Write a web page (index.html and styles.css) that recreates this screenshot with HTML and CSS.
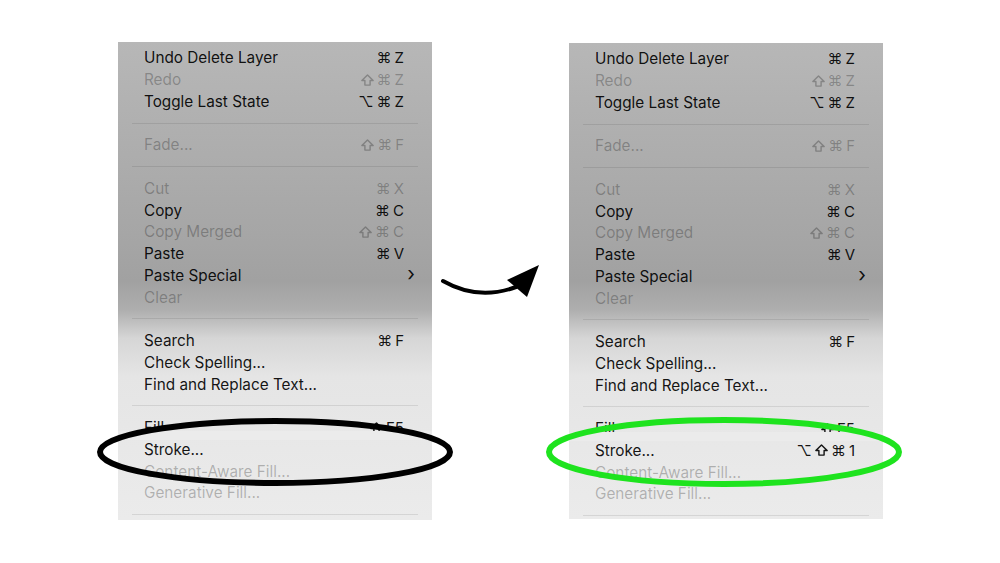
FILE: index.html
```html
<!DOCTYPE html>
<html lang="en">
<head>
    <meta charset="UTF-8">
    <title>Edit Menu – Vorher / Nachher</title>
    <link rel="stylesheet" href="styles.css">
</head>
<body>
<div class="seite">

    <!-- Menü vorher -->
    <div class="menue menue-links">
        <div class="zeile"><span>Undo Delete Layer</span><span class="kurz"><i>⌘</i><i>Z</i></span></div>
        <div class="zeile aus"><span>Redo</span><span class="kurz"><svg class="shift" viewBox="0 0 12 11"><path d="M6 0.8 L11.2 6 H8.4 V10.2 H3.6 V6 H0.8 Z"/></svg><i>⌘</i><i>Z</i></span></div>
        <div class="zeile"><span>Toggle Last State</span><span class="kurz"><i>⌥</i><i>⌘</i><i>Z</i></span></div>
        <div class="trenner"></div>
        <div class="zeile aus"><span>Fade...</span><span class="kurz"><svg class="shift" viewBox="0 0 12 11"><path d="M6 0.8 L11.2 6 H8.4 V10.2 H3.6 V6 H0.8 Z"/></svg><i>⌘</i><i>F</i></span></div>
        <div class="trenner"></div>
        <div class="zeile aus"><span>Cut</span><span class="kurz"><i>⌘</i><i>X</i></span></div>
        <div class="zeile"><span>Copy</span><span class="kurz"><i>⌘</i><i>C</i></span></div>
        <div class="zeile aus"><span>Copy Merged</span><span class="kurz"><svg class="shift" viewBox="0 0 12 11"><path d="M6 0.8 L11.2 6 H8.4 V10.2 H3.6 V6 H0.8 Z"/></svg><i>⌘</i><i>C</i></span></div>
        <div class="zeile"><span>Paste</span><span class="kurz"><i>⌘</i><i>V</i></span></div>
        <div class="zeile untermenue"><span>Paste Special</span><span class="pfeil">›</span></div>
        <div class="zeile aus"><span>Clear</span></div>
        <div class="trenner"></div>
        <div class="zeile"><span>Search</span><span class="kurz"><i>⌘</i><i>F</i></span></div>
        <div class="zeile"><span>Check Spelling...</span></div>
        <div class="zeile"><span>Find and Replace Text...</span></div>
        <div class="trenner"></div>
        <div class="zeile verdeckt"><span>Fill...</span><span class="kurz"><svg class="shift" viewBox="0 0 12 11"><path d="M6 0.8 L11.2 6 H8.4 V10.2 H3.6 V6 H0.8 Z"/></svg><i>F5</i></span></div>
        <div class="zeile"><span>Stroke...</span></div>
        <div class="zeile aus"><span>Content-Aware Fill...</span></div>
        <div class="zeile aus"><span>Generative Fill...</span></div>
        <div class="trenner"></div>
    </div>

    <!-- Menü nachher -->
    <div class="menue menue-rechts">
        <div class="zeile"><span>Undo Delete Layer</span><span class="kurz"><i>⌘</i><i>Z</i></span></div>
        <div class="zeile aus"><span>Redo</span><span class="kurz"><svg class="shift" viewBox="0 0 12 11"><path d="M6 0.8 L11.2 6 H8.4 V10.2 H3.6 V6 H0.8 Z"/></svg><i>⌘</i><i>Z</i></span></div>
        <div class="zeile"><span>Toggle Last State</span><span class="kurz"><i>⌥</i><i>⌘</i><i>Z</i></span></div>
        <div class="trenner"></div>
        <div class="zeile aus"><span>Fade...</span><span class="kurz"><svg class="shift" viewBox="0 0 12 11"><path d="M6 0.8 L11.2 6 H8.4 V10.2 H3.6 V6 H0.8 Z"/></svg><i>⌘</i><i>F</i></span></div>
        <div class="trenner"></div>
        <div class="zeile aus"><span>Cut</span><span class="kurz"><i>⌘</i><i>X</i></span></div>
        <div class="zeile"><span>Copy</span><span class="kurz"><i>⌘</i><i>C</i></span></div>
        <div class="zeile aus"><span>Copy Merged</span><span class="kurz"><svg class="shift" viewBox="0 0 12 11"><path d="M6 0.8 L11.2 6 H8.4 V10.2 H3.6 V6 H0.8 Z"/></svg><i>⌘</i><i>C</i></span></div>
        <div class="zeile"><span>Paste</span><span class="kurz"><i>⌘</i><i>V</i></span></div>
        <div class="zeile untermenue"><span>Paste Special</span><span class="pfeil">›</span></div>
        <div class="zeile aus"><span>Clear</span></div>
        <div class="trenner"></div>
        <div class="zeile"><span>Search</span><span class="kurz"><i>⌘</i><i>F</i></span></div>
        <div class="zeile"><span>Check Spelling...</span></div>
        <div class="zeile"><span>Find and Replace Text...</span></div>
        <div class="trenner"></div>
        <div class="zeile verdeckt"><span>Fill...</span><span class="kurz"><svg class="shift" viewBox="0 0 12 11"><path d="M6 0.8 L11.2 6 H8.4 V10.2 H3.6 V6 H0.8 Z"/></svg><i>F5</i></span></div>
        <div class="zeile"><span>Stroke...</span><span class="kurz"><i>⌥</i><svg class="shift" viewBox="0 0 12 11"><path d="M6 0.8 L11.2 6 H8.4 V10.2 H3.6 V6 H0.8 Z"/></svg><i>⌘</i><i>1</i></span></div>
        <div class="zeile aus"><span>Content-Aware Fill...</span></div>
        <div class="zeile aus"><span>Generative Fill...</span></div>
        <div class="trenner"></div>
    </div>

    <!-- Markierungen und Pfeil über den Menüs -->
    <svg class="markierung" width="1000" height="563" viewBox="0 0 1000 563">
        <path d="M443 281 Q 478 301 516 287" fill="none" stroke="#000" stroke-width="4" stroke-linecap="round"/>
        <polygon points="507,280 539,265 527,297" fill="#000"/>
        <ellipse cx="275" cy="452" rx="175" ry="31" fill="none" stroke="#000" stroke-width="6"/>
        <ellipse cx="724" cy="452" rx="175" ry="32" fill="none" stroke="#1ee31e" stroke-width="6"/>
    </svg>
</div>
</body>
</html>
```

FILE: styles.css
```css
/* Grundlayout */
body {
    margin: 0;
    background-color: #fff;
}

.seite {
    position: relative;
    width: 1000px;
    height: 563px;
    display: flex;
    align-items: flex-start;
    gap: 137px;
    padding-left: 118px;
    box-sizing: border-box;
    font-family: Inter, "Noto Sans", "DejaVu Sans", sans-serif;
}

/* Menü-Box mit Verlauf */
.menue {
    width: 314px;
    height: 478px;
    margin-top: 42px;
    padding-top: 5px;
    box-sizing: border-box;
    overflow: hidden;
    background: linear-gradient(to bottom,
        #b7b7b7 0%,
        #a6a6a6 40%,
        #a1a1a1 50%,
        #aeaeae 56%,
        #d6d6d6 62%,
        #e5e5e5 70%,
        #ebebeb 100%);
}

.menue-rechts {
    margin-top: 43px;
    height: 476px;
}

/* Menüzeilen */
.zeile {
    position: relative;
    height: 21.75px;
    display: flex;
    align-items: center;
    justify-content: space-between;
    padding: 0 28px 0 26px;
    font-size: 15.3px;
    color: rgba(0, 0, 0, 0.92);
    white-space: nowrap;
}

.zeile.aus {
    color: rgba(0, 0, 0, 0.26);
}

.untermenue {
    padding-right: 17px;
}

.pfeil {
    font-size: 20px;
    line-height: 1;
    margin-top: -3px;
}

/* Tastenkürzel */
.kurz {
    display: flex;
    align-items: center;
    gap: 3px;
    font-family: Inter, "DejaVu Sans", sans-serif;
    font-size: 15px;
}

.kurz i {
    font-style: normal;
}

.shift {
    width: 13px;
    height: 12px;
    fill: none;
    stroke: currentColor;
    stroke-width: 1.3;
    stroke-linejoin: round;
}

/* Untere Hälfte der Fill-Zeile ist überdeckt */
.verdeckt::after {
    content: "";
    position: absolute;
    left: 0;
    right: 0;
    top: 14px;
    bottom: -1px;
    background-color: #ebebeb;
}

/* Trennlinie */
.trenner {
    height: 21.75px;
    display: flex;
    align-items: center;
    padding: 0 14px;
}

.trenner::before {
    content: "";
    flex: 1;
    height: 1px;
    background-color: rgba(0, 0, 0, 0.09);
}

/* Overlay mit Ellipsen und Pfeil */
.markierung {
    position: absolute;
    left: 0;
    top: 0;
    pointer-events: none;
}
```
